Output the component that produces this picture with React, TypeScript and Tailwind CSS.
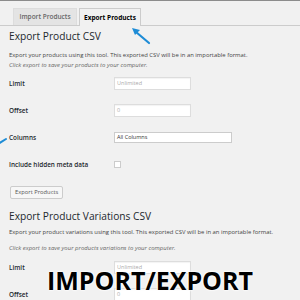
import React from 'react';

const Field = ({ label, children }: { label: string; children?: React.ReactNode }) => (
  <div className="flex items-center h-[13px]">
    <div className="w-[105px] text-[6.4px] font-semibold text-[#23282d]">{label}</div>
    {children}
  </div>
);

const Input = ({ value, placeholder }: { value?: string; placeholder?: string }) => (
  <div className="w-[77px] h-[13px] bg-white border border-[#dddddd] shadow-[inset_0_1px_1px_rgba(0,0,0,0.05)] px-[2px] flex items-center text-[5.5px] text-[#aaaaaa]">
    {value ?? placeholder}
  </div>
);

export default function App() {
  return (
    <div
      className="relative w-[300px] h-[300px] overflow-hidden bg-[#f1f1f1] border-t border-[#8c8c8c]"
      style={{ fontFamily: '"Open Sans", "Liberation Sans", sans-serif' }}
    >
      {/* Tabs */}
      <div className="flex items-end gap-[2px] pl-[13px] pt-[7px] border-b border-[#cccccc] h-[25px]">
        <div className="h-[17px] w-[64px] bg-[#e4e4e4] border border-[#dddddd] border-b-0 flex items-center justify-center text-[6.5px] font-semibold text-[#666]">
          Import Products
        </div>
        <div className="h-[18px] w-[62px] bg-[#f1f1f1] border border-[#cccccc] border-b-0 -mb-px flex items-center justify-center text-[6.5px] font-bold text-black">
          Export Products
        </div>
      </div>

      <div className="px-[9px]">
        <h2 className="mt-[3px] text-[10.2px] text-[#23282d] leading-[14px]">Export Product CSV</h2>
        <p className="mt-[8px] text-[5.9px] text-[#444] leading-[8px] whitespace-nowrap">
          Export your products using this tool. This exported CSV will be in an importable format.
        </p>
        <p className="mt-[2px] text-[6px] italic text-[#666] leading-[8px] whitespace-nowrap">
          Click export to save your products to your computer.
        </p>

        <div className="mt-[8px] flex flex-col gap-[14px]">
          <Field label="Limit">
            <Input placeholder="Unlimited" />
          </Field>
          <Field label="Offset">
            <Input placeholder="0" />
          </Field>
          <Field label="Columns">
            <div className="w-[118px] h-[11px] bg-white border border-[#cccccc] px-[2px] flex items-center text-[5.5px] text-[#333]">
              All Columns
            </div>
          </Field>
          <Field label="Include hidden meta data">
            <div className="w-[7px] h-[7px] bg-white border border-[#cccccc]" />
          </Field>
        </div>

        <button className="mt-[15px] ml-px h-[13px] px-[4px] bg-[#f7f7f7] border border-[#cccccc] rounded-[2px] text-[5.8px] text-[#555] flex items-center">
          Export Products
        </button>

        <h2 className="mt-[10px] text-[10.2px] text-[#23282d] leading-[14px]">Export Product Variations CSV</h2>
        <p className="mt-[5px] text-[5.9px] text-[#444] leading-[8px] whitespace-nowrap">
          Export your product variations using this tool. This exported CSV will be in an importable format.
        </p>
        <p className="mt-[8px] text-[6px] italic text-[#666] leading-[8px] whitespace-nowrap">
          Click export to save your products variations to your computer.
        </p>

        <div className="mt-[9px] flex flex-col gap-[14px]">
          <Field label="Limit">
            <Input placeholder="Unlimited" />
          </Field>
          <Field label="Offset">
            <Input placeholder="0" />
          </Field>
        </div>
      </div>

      {/* Arrows */}
      <svg className="absolute left-0 top-0" width="300" height="300" viewBox="0 0 300 300">
        <line x1="149" y1="42" x2="136" y2="31" stroke="#1e8cd6" strokeWidth="2.2" strokeLinecap="round" />
        <polygon points="132,27 140,29 135,34" fill="#1e8cd6" />
        <line x1="-2" y1="143" x2="6" y2="138" stroke="#1e8cd6" strokeWidth="2" strokeLinecap="round" />
      </svg>

      {/* Overlay title */}
      <div
        className="absolute left-0 right-0 top-[262px] text-center text-[25px] font-bold text-black leading-[34px]"
        style={{ textShadow: '0 0 2px #fff, 0 0 2px #fff, 0 0 3px #fff' }}
      >
        IMPORT/EXPORT
      </div>
    </div>
  );
}
